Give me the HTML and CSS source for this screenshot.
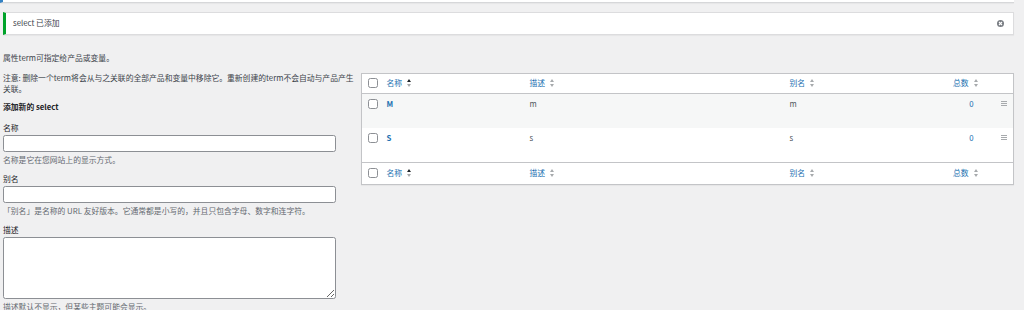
FILE: index.html
```html
<!DOCTYPE html>
<html lang="zh-CN">
<head>
    <meta charset="UTF-8">
    <meta name="viewport" content="width=device-width, initial-scale=1.0">
    <title>select</title>
    <link rel="stylesheet" href="styles.css">
</head>
<body>
    <div class="wrap">
        <div class="notice notice-info"></div>

        <div class="notice notice-success">
            <p>select 已添加</p>
            <button type="button" class="notice-dismiss" aria-label="忽略此通知">
                <svg width="7" height="7" viewBox="0 0 7 7">
                    <circle cx="3.5" cy="3.5" r="3.5" fill="#787c82"/>
                    <path d="M2 2 L5 5 M5 2 L2 5" stroke="#fff" stroke-width="1.1"/>
                </svg>
            </button>
        </div>

        <div class="col-wrap">
            <div class="col-left">
                <p>属性term可指定给产品或变量。</p>
                <p class="note">注意: 删除一个term将会从与之关联的全部产品和变量中移除它。重新创建的term不会自动与产品产生关联。</p>

                <h2>添加新的 select</h2>
                <form id="addtag">
                    <div class="form-field">
                        <label for="tag-name">名称</label>
                        <input type="text" id="tag-name">
                        <p class="desc">名称是它在您网站上的显示方式。</p>
                    </div>
                    <div class="form-field">
                        <label for="tag-slug">别名</label>
                        <input type="text" id="tag-slug">
                        <p class="desc">「别名」是名称的 URL 友好版本。它通常都是小写的，并且只包含字母、数字和连字符。</p>
                    </div>
                    <div class="form-field">
                        <label for="tag-description">描述</label>
                        <textarea id="tag-description"></textarea>
                        <p class="desc">描述默认不显示，但某些主题可能会显示。</p>
                    </div>
                </form>
            </div>

            <div class="col-right">
                <table class="terms">
                    <colgroup>
                        <col class="c-cb">
                        <col class="c-name">
                        <col class="c-desc">
                        <col class="c-slug">
                        <col class="c-count">
                        <col class="c-handle">
                    </colgroup>
                    <thead>
                        <tr>
                            <th class="cb"><input type="checkbox"></th>
                            <th><a href="#">名称</a><span class="sort sorted"><svg width="4" height="8" viewBox="0 0 4 8"><path d="M0 3 L2 0 L4 3Z" fill="#1d2327"/><path d="M0 5 L2 8 L4 5Z" fill="#a7aaad"/></svg></span></th>
                            <th><a href="#">描述</a><span class="sort"><svg width="4" height="8" viewBox="0 0 4 8"><path d="M0 3 L2 0 L4 3Z" fill="#a7aaad"/><path d="M0 5 L2 8 L4 5Z" fill="#a7aaad"/></svg></span></th>
                            <th><a href="#">别名</a><span class="sort"><svg width="4" height="8" viewBox="0 0 4 8"><path d="M0 3 L2 0 L4 3Z" fill="#a7aaad"/><path d="M0 5 L2 8 L4 5Z" fill="#a7aaad"/></svg></span></th>
                            <th class="count"><a href="#">总数</a><span class="sort"><svg width="4" height="8" viewBox="0 0 4 8"><path d="M0 3 L2 0 L4 3Z" fill="#a7aaad"/><path d="M0 5 L2 8 L4 5Z" fill="#a7aaad"/></svg></span></th>
                            <th></th>
                        </tr>
                    </thead>
                    <tbody>
                        <tr class="alternate">
                            <td class="cb"><input type="checkbox"></td>
                            <td class="name"><a class="row-title" href="#">M</a><div class="row-actions"></div></td>
                            <td>m</td>
                            <td>m</td>
                            <td class="count"><a href="#">0</a></td>
                            <td class="handle"><svg width="6" height="5" viewBox="0 0 6 5"><rect y="0" width="6" height="1" fill="#a7aaad"/><rect y="2" width="6" height="1" fill="#a7aaad"/><rect y="4" width="6" height="1" fill="#a7aaad"/></svg></td>
                        </tr>
                        <tr>
                            <td class="cb"><input type="checkbox"></td>
                            <td class="name"><a class="row-title" href="#">S</a><div class="row-actions"></div></td>
                            <td>s</td>
                            <td>s</td>
                            <td class="count"><a href="#">0</a></td>
                            <td class="handle"><svg width="6" height="5" viewBox="0 0 6 5"><rect y="0" width="6" height="1" fill="#a7aaad"/><rect y="2" width="6" height="1" fill="#a7aaad"/><rect y="4" width="6" height="1" fill="#a7aaad"/></svg></td>
                        </tr>
                    </tbody>
                    <tfoot>
                        <tr>
                            <th class="cb"><input type="checkbox"></th>
                            <th><a href="#">名称</a><span class="sort sorted"><svg width="4" height="8" viewBox="0 0 4 8"><path d="M0 3 L2 0 L4 3Z" fill="#1d2327"/><path d="M0 5 L2 8 L4 5Z" fill="#a7aaad"/></svg></span></th>
                            <th><a href="#">描述</a><span class="sort"><svg width="4" height="8" viewBox="0 0 4 8"><path d="M0 3 L2 0 L4 3Z" fill="#a7aaad"/><path d="M0 5 L2 8 L4 5Z" fill="#a7aaad"/></svg></span></th>
                            <th><a href="#">别名</a><span class="sort"><svg width="4" height="8" viewBox="0 0 4 8"><path d="M0 3 L2 0 L4 3Z" fill="#a7aaad"/><path d="M0 5 L2 8 L4 5Z" fill="#a7aaad"/></svg></span></th>
                            <th class="count"><a href="#">总数</a><span class="sort"><svg width="4" height="8" viewBox="0 0 4 8"><path d="M0 3 L2 0 L4 3Z" fill="#a7aaad"/><path d="M0 5 L2 8 L4 5Z" fill="#a7aaad"/></svg></span></th>
                            <th></th>
                        </tr>
                    </tfoot>
                </table>
            </div>
        </div>
    </div>
</body>
</html>
```

FILE: styles.css
```css
* {
    box-sizing: border-box;
}

body {
    margin: 0;
    height: 310px;
    overflow: hidden;
    background: #f0f0f1;
    color: #3c434a;
    font-family: "Noto Sans CJK SC", "Noto Sans", sans-serif;
    font-size: 7.8px;
    line-height: 10.9px;
}

a {
    color: #2271b1;
    text-decoration: none;
}

p {
    margin: 0;
}

.wrap {
    padding: 0 10px 0 3px;
}

/* notices */
.notice {
    background: #fff;
    box-shadow: 0 1px 1px rgba(0, 0, 0, .04);
}

.notice-info {
    height: 3px;
    margin-left: -3px;
    border-left: 3px solid #3582c4;
    border-bottom: 1px solid #d6d7d9;
}

.notice-success {
    display: flex;
    align-items: center;
    justify-content: space-between;
    height: 23px;
    margin-top: 9px;
    padding: 0 9px 0 7px;
    border: 1px solid #dcdcde;
    border-left: 3px solid #00a32a;
}

.notice-dismiss {
    display: flex;
    padding: 0;
    border: 0;
    background: none;
}

/* columns */
.col-wrap {
    display: flex;
    margin-top: 18px;
}

.col-left {
    flex: 0 0 351px;
}

.col-right {
    flex: 1;
    margin-left: 7px;
    padding-top: 19.5px;
}

.note {
    margin-top: 8.8px;
}

h2 {
    margin: 7.5px 0 0;
    font-size: 7.8px;
    font-weight: 700;
    color: #1d2327;
}

.form-field {
    margin-top: 10px;
}

.form-field + .form-field {
    margin-top: 8.3px;
}

.form-field label {
    display: block;
    color: #1d2327;
}

.form-field input,
.form-field textarea {
    display: block;
    width: 333px;
    margin-top: 1px;
    border: 1px solid #8c8f94;
    border-radius: 2.4px;
    background: #fff;
    font: inherit;
}

.form-field input {
    height: 17px;
}

.form-field textarea {
    height: 62.3px;
}

.desc {
    margin-top: 3px;
    color: #646970;
}

/* terms table */
.terms {
    width: 100%;
    table-layout: fixed;
    border-collapse: collapse;
    background: #fff;
    border: 1px solid #c3c4c7;
    box-shadow: 0 1px 1px rgba(0, 0, 0, .04);
}

.c-cb { width: 19px; }
.c-name { width: 143px; }
.c-desc { width: 260px; }
.c-slug { width: 152px; }
.c-count { width: 48px; }
.c-handle { width: 30px; }

.terms th {
    padding: 4.2px 6px;
    text-align: left;
    font-weight: 400;
    vertical-align: middle;
}

.terms thead th {
    border-bottom: 1px solid #c3c4c7;
}

.terms tfoot th {
    border-top: 1px solid #c3c4c7;
    padding: 5.2px 6px;
}

.terms td {
    padding: 5px 6px;
    vertical-align: top;
    color: #50575e;
}

.terms tr.alternate td {
    background: #f6f7f7;
}

.terms .cb {
    padding-left: 6px;
    padding-right: 0;
}

.terms input[type="checkbox"] {
    appearance: none;
    display: block;
    width: 10px;
    height: 10px;
    margin: 0;
    border: 1px solid #8c8f94;
    border-radius: 2.4px;
    background: #fff;
}

.terms td.cb input {
    margin-top: 0.5px;
}

.sort {
    display: inline-block;
    margin-left: 5px;
    vertical-align: -1px;
}

.sort svg {
    display: block;
}

.row-title {
    font-weight: 600;
}

.row-actions {
    height: 13px;
}

.terms th.count {
    text-align: right;
}

.terms td.count {
    text-align: right;
    padding-right: 10px;
}

.terms td.handle {
    padding: 7px 0 0 17px;
}

.handle svg {
    display: block;
}
```
